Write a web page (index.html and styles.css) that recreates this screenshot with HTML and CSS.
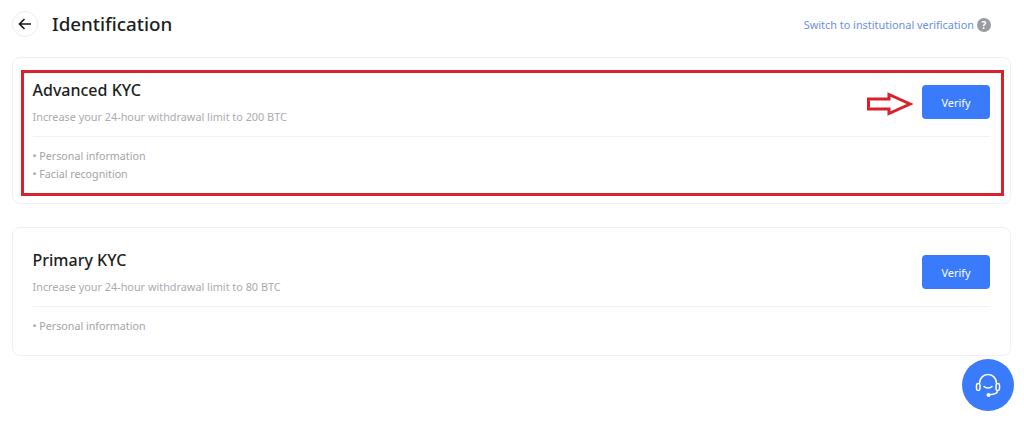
FILE: index.html
```html
<!DOCTYPE html>
<html lang="en">
<head>
    <meta charset="UTF-8">
    <title>Identification</title>
    <link rel="stylesheet" href="styles.css">
</head>
<body>
    <header class="top-bar">
        <div class="top-left">
            <a class="back-btn" href="#">
                <svg width="14" height="14" viewBox="0 0 14 14" fill="none" stroke="#1a1a1a" stroke-width="1.7">
                    <path d="M13 7H1.5M6.5 2L1.5 7l5 5"/>
                </svg>
            </a>
            <h1>Identification</h1>
        </div>
        <div class="top-right">
            <a class="switch-link" href="#">Switch to institutional verification</a>
            <span class="help-icon">?</span>
        </div>
    </header>

    <section class="card card-advanced">
        <div class="card-head">
            <div>
                <h2>Advanced KYC</h2>
                <p class="limit">Increase your 24-hour withdrawal limit to 200 BTC</p>
            </div>
            <button class="verify-btn">Verify</button>
        </div>
        <ul class="req-list">
            <li>• Personal information</li>
            <li>• Facial recognition</li>
        </ul>
        <!-- annotation over the card -->
        <div class="red-box"></div>
        <svg class="red-arrow" width="48" height="24" viewBox="0 0 48 24" fill="#fff" stroke="#d9202c" stroke-width="3">
            <path d="M1.500 7H22V2.500L43 12 22 21.500V17H1.500z"/>
        </svg>
    </section>

    <section class="card card-primary">
        <div class="card-head">
            <div>
                <h2>Primary KYC</h2>
                <p class="limit">Increase your 24-hour withdrawal limit to 80 BTC</p>
            </div>
            <button class="verify-btn">Verify</button>
        </div>
        <ul class="req-list">
            <li>• Personal information</li>
        </ul>
    </section>

    <a class="support-btn" href="#">
        <svg width="28" height="28" viewBox="0 0 28 28" fill="none" stroke="#fff" stroke-width="1.500">
            <path d="M5.500 12.500C5.500 7.500 9 3.500 14 3.500s8.500 4 8.500 9"/>
            <rect x="2.500" y="12.500" width="3.500" height="7" rx="1.700"/>
            <rect x="22" y="12.500" width="3.500" height="7" rx="1.700"/>
            <path d="M10 15.500c2 2 6 2 8 0" stroke-linecap="round"/>
            <path d="M23.500 19.500c0 2.500-3 4-8 4.200"/>
            <circle cx="14.500" cy="24" r="2" fill="#fff" stroke="none"/>
        </svg>
    </a>
</body>
</html>
```

FILE: styles.css
```css
html, body {
    height: 100%;
    overflow: hidden;
}
body {
    font-family: "Noto Sans", "Open Sans", Arial, sans-serif;
    margin: 0;
    padding: 11px 13px 0 12px;
    box-sizing: border-box;
    background-color: #ffffff;
    color: #1c1f23;
    position: relative;
}
.top-bar {
    display: flex;
    justify-content: space-between;
    align-items: center;
    height: 26px;
    margin-bottom: 20px;
}
.top-left {
    display: flex;
    align-items: center;
    gap: 14px;
}
.back-btn {
    display: flex;
    align-items: center;
    justify-content: center;
    width: 26px;
    height: 26px;
    border: 1px solid #ececec;
    border-radius: 50%;
    box-sizing: border-box;
}
h1 {
    margin: 0;
    font-size: 18.800px;
    font-weight: 500;
    line-height: 26px;
}
.top-right {
    display: flex;
    align-items: center;
    gap: 3px;
    padding-right: 20px;
    margin-top: 1px;
}
.switch-link {
    font-size: 10.900px;
    color: #6a90e8;
    text-decoration: none;
}
.help-icon {
    width: 14px;
    height: 14px;
    border-radius: 50%;
    background-color: #9a9ca3;
    color: #ffffff;
    font-size: 10px;
    font-weight: 700;
    line-height: 14px;
    text-align: center;
}
.card {
    position: relative;
    border: 1px solid #f1f1f3;
    border-radius: 8px;
    padding: 20px 20px 0 19.500px;
}
.card-advanced {
    height: 147px;
    box-sizing: border-box;
    margin-bottom: 23px;
}
.card-primary {
    height: 129px;
    box-sizing: border-box;
}
.card-head {
    display: flex;
    justify-content: space-between;
    align-items: center;
    padding-bottom: 10px;
    border-bottom: 1px solid #f2f2f4;
}
h2 {
    margin: 0 0 6px;
    font-size: 16px;
    font-weight: 500;
    line-height: 24px;
}
.limit {
    margin: 0;
    font-size: 10.850px;
    line-height: 18px;
    color: #a9abb0;
}
.verify-btn {
    width: 68px;
    height: 34px;
    border: none;
    border-radius: 4px;
    background-color: #3a7bfb;
    color: #ffffff;
    font-family: inherit;
    font-size: 10.900px;
}
.req-list {
    list-style: none;
    margin: 10px 0 0;
    padding: 0;
    font-size: 10.700px;
    line-height: 18px;
    color: #a2a4a9;
}
.red-box {
    position: absolute;
    left: 8px;
    top: 12px;
    width: 983px;
    height: 126px;
    box-sizing: border-box;
    border: 3px solid #d9202c;
}
.red-arrow {
    position: absolute;
    left: 854px;
    top: 34px;
}
.support-btn {
    position: absolute;
    right: 10px;
    bottom: 11px;
    width: 52px;
    height: 52px;
    border-radius: 50%;
    background-color: #3a7bfb;
    display: flex;
    align-items: center;
    justify-content: center;
}
```
